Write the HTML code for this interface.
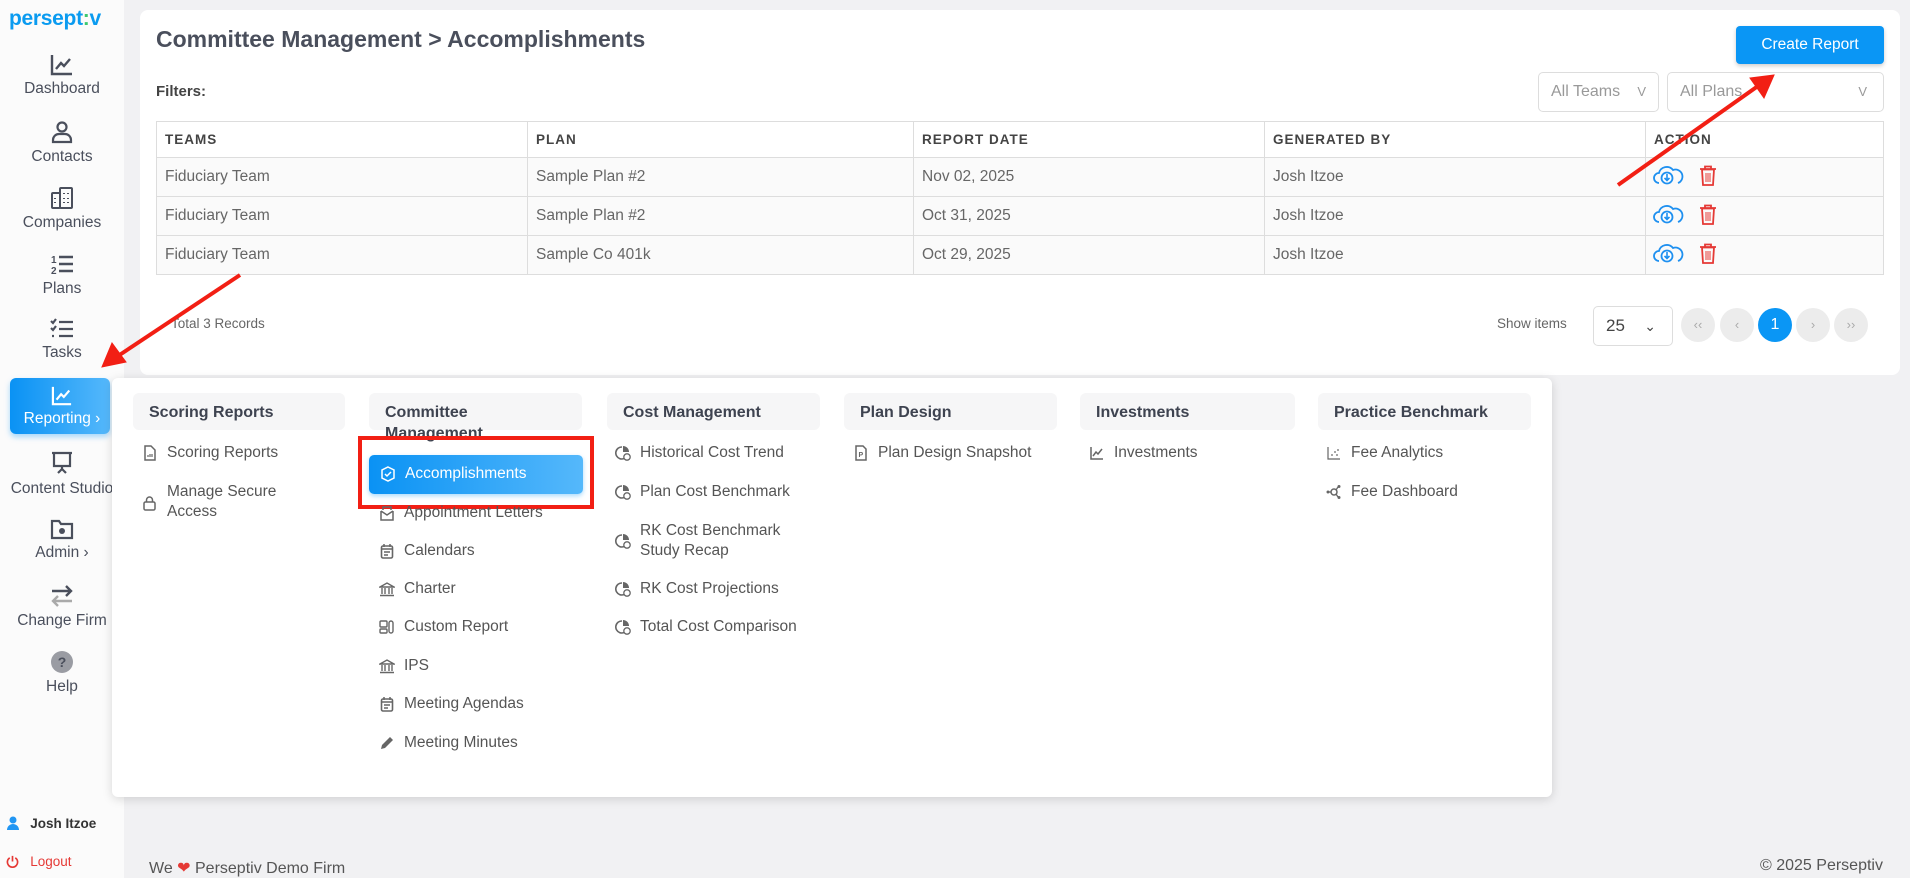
<!DOCTYPE html>
<html><head><meta charset="utf-8"><style>
*{box-sizing:border-box;margin:0;padding:0}
body{width:1910px;height:878px;background:#f1f1f3;font-family:"Liberation Sans",sans-serif;color:#555;position:relative;overflow:hidden}
.a{position:absolute}
.side{left:0;top:0;width:124px;height:878px;background:#fbfbfb}
.logo{left:9px;top:7px;font-size:21px;font-weight:bold;color:#0a9bf0;letter-spacing:-0.3px}
.nav{position:absolute;left:0;width:124px;text-align:center;font-size:15.5px;color:#4a4f5c}
.nav svg{display:block;margin:0 auto 4px}
.card{left:140px;top:10px;width:1760px;height:365px;background:#fff;border-radius:8px}
.title{left:156px;top:26px;font-size:23px;font-weight:bold;color:#4a4f5c}
.btn{left:1736px;top:26px;width:148px;height:38px;background:#0a96f5;border-radius:4px;color:#fff;font-size:15.5px;text-align:center;line-height:38px;box-shadow:0 2px 4px rgba(0,0,0,.2)}
.sel{height:40px;border:1px solid #ddd;border-radius:5px;color:#999;font-size:16px;line-height:38px;padding-left:12px;background:#fff}
table{position:absolute;left:156px;top:121px;width:1728px;border-collapse:collapse;font-size:15.5px}
td,th{border:1px solid #ddd;text-align:left;padding-left:8px;color:#666;font-weight:normal}
th{height:36px;font-size:13.5px;font-weight:bold;letter-spacing:1px;color:#444}
td{height:39px;background:#fafafa}
.pg{width:34px;height:34px;border-radius:50%;background:#ececec;color:#aaa;text-align:center;line-height:34px;font-size:13px;top:308px}
.menu{left:112px;top:378px;width:1440px;height:419px;background:#fff;border-radius:6px;box-shadow:0 2px 10px rgba(0,0,0,.15)}
.hd{top:393px;height:37px;background:#f6f6f7;border-radius:6px;font-size:16px;font-weight:bold;color:#3e4350;padding:9px 0 0 16px;line-height:21px}
.it{font-size:15.5px;color:#555;line-height:20px;padding-left:25px}
.it svg{position:absolute;left:0;top:2px}
</style></head><body>
<svg width="0" height="0" style="position:absolute">
<defs>
<g id="doc"><path d="M3 1h6l4 4v10H3z" fill="none" stroke="#666" stroke-width="1.5"/><path d="M6 12v-2M8 12V9M10 12v-3" stroke="#666" stroke-width="1.2"/></g>
<g id="lock"><rect x="2" y="7" width="11" height="8" rx="1.5" fill="none" stroke="#666" stroke-width="1.5"/><path d="M4.5 7V5a3 3 0 0 1 6 0v2" fill="none" stroke="#666" stroke-width="1.5"/></g>
<g id="pie"><path d="M7 2a6 6 0 1 0 5 9" fill="none" stroke="#666" stroke-width="1.6"/><path d="M8 1v6h6a6 6 0 0 0-6-6z" fill="#666"/><circle cx="12" cy="12" r="3.2" fill="#fff" stroke="#666" stroke-width="1.3"/></g>
<g id="mail"><path d="M2 6v9h12V6M2 6l6 4 6-4M4 5V2h8v3" fill="none" stroke="#666" stroke-width="1.5"/></g>
<g id="cal"><rect x="2.5" y="3" width="11" height="12" rx="1.5" fill="none" stroke="#666" stroke-width="1.6"/><path d="M5 1v3M11 1v3M2.5 6h11M5 9h6M5 12h4" stroke="#666" stroke-width="1.5"/></g>
<g id="bank"><path d="M1 6l7-4 7 4zM3 7v6M6 7v6M10 7v6M13 7v6M1 14.5h14" fill="none" stroke="#666" stroke-width="1.4"/></g>
<g id="cust"><rect x="1" y="2" width="7" height="6" rx="1" fill="none" stroke="#666" stroke-width="1.4"/><rect x="1" y="10" width="7" height="4" rx="1" fill="none" stroke="#666" stroke-width="1.4"/><rect x="10" y="2" width="4" height="12" rx="2" fill="none" stroke="#666" stroke-width="1.4"/></g>
<g id="pen"><path d="M2 14l1-4 8-8 3 3-8 8z" fill="#666"/></g>
<g id="chart"><path d="M2 2v12h12M4 11l3-4 2 2 4-5" fill="none" stroke="#666" stroke-width="1.5"/></g>
<g id="dots"><path d="M2 2v12h12" fill="none" stroke="#666" stroke-width="1.2"/><circle cx="6" cy="10" r=".9" fill="#666"/><circle cx="9" cy="7" r=".9" fill="#666"/><circle cx="11" cy="10" r=".9" fill="#666"/><circle cx="12" cy="5" r=".9" fill="#666"/></g>
<g id="net"><circle cx="8" cy="8" r="3" fill="none" stroke="#666" stroke-width="1.5"/><circle cx="2" cy="8" r="1.5" fill="#666"/><circle cx="13" cy="2.5" r="1.5" fill="#666"/><circle cx="13" cy="13.5" r="1.5" fill="#666"/><path d="M3 8h2M10 6l2-3M10 10l2 3" stroke="#666" stroke-width="1.3"/></g>
<g id="pdoc"><path d="M3 1h7l3 3v11H3z" fill="none" stroke="#666" stroke-width="1.5"/><text x="5.5" y="12" font-size="7" font-weight="bold" fill="#666" font-family="Liberation Sans">P</text></g>
</defs></svg>
<div class="a side"></div>
<div class="a logo">persept<span style="color:#3cc86e">:</span>v</div>

<div class="nav" style="top:54px"><svg width="24" height="22" viewBox="0 0 24 22"><path d="M2 1v19h20M6 15l5-6 3 3 6-7" fill="none" stroke="#4a4f5c" stroke-width="2.4"/></svg>Dashboard</div>
<div class="nav" style="top:120px"><svg width="24" height="24" viewBox="0 0 24 24"><circle cx="12" cy="7" r="4.5" fill="none" stroke="#4a4f5c" stroke-width="2.2"/><path d="M3 22v-2a6 6 0 0 1 6-6h6a6 6 0 0 1 6 6v2z" fill="none" stroke="#4a4f5c" stroke-width="2.2"/></svg>Contacts</div>
<div class="nav" style="top:186px"><svg width="24" height="24" viewBox="0 0 24 24"><rect x="2" y="7" width="8" height="15" rx="1" fill="none" stroke="#4a4f5c" stroke-width="2"/><rect x="10" y="2" width="12" height="20" rx="1" fill="none" stroke="#4a4f5c" stroke-width="2"/><path d="M5 12v1M5 16v1M14 7v1M18 7v1M14 12v1M18 12v1M14 16v1M18 16v1" stroke="#4a4f5c" stroke-width="2"/></svg>Companies</div>
<div class="nav" style="top:252px"><svg width="24" height="24" viewBox="0 0 24 24"><text x="1" y="11" font-size="10" font-weight="bold" fill="#4a4f5c" font-family="Liberation Sans">1</text><text x="1" y="22" font-size="10" font-weight="bold" fill="#4a4f5c" font-family="Liberation Sans">2</text><path d="M9 5h14M9 12h14M9 19h14" stroke="#4a4f5c" stroke-width="2.4"/></svg>Plans</div>
<div class="nav" style="top:318px"><svg width="24" height="22" viewBox="0 0 24 22"><path d="M1 3l2 2 3-4M1 10l2 2 3-4M9 4h14M9 11h14M9 18h14M2 18h2" fill="none" stroke="#4a4f5c" stroke-width="2.2"/></svg>Tasks</div>
<div class="a" style="left:10px;top:378px;width:100px;height:56px;border-radius:6px;background:linear-gradient(90deg,#0a92f4,#55b8fb);box-shadow:0 3px 6px rgba(10,150,245,.35)"></div>
<div class="nav" style="top:386px;color:#fff"><svg width="22" height="20" viewBox="0 0 24 22"><path d="M2 1v19h20M6 15l5-6 3 3 6-7" fill="none" stroke="#fff" stroke-width="2.4"/></svg>Reporting ›</div>
<div class="nav" style="top:450px"><svg width="24" height="26" viewBox="0 0 24 26"><path d="M2 3h20M4 3v13h16V3M12 16v3M8 23l4-4 4 4" fill="none" stroke="#4a4f5c" stroke-width="2.2"/></svg>Content Studio</div>
<div class="nav" style="top:518px"><svg width="24" height="22" viewBox="0 0 24 22"><path d="M2 3h7l2 3h11v14H2z" fill="none" stroke="#4a4f5c" stroke-width="2.2"/><circle cx="12" cy="13" r="3" fill="#4a4f5c"/></svg>Admin ›</div>
<div class="nav" style="top:584px"><svg width="24" height="24" viewBox="0 0 24 24"><path d="M2 7h19M16 2l5 5-5 5" fill="none" stroke="#4a4f5c" stroke-width="2.4"/><path d="M22 17H3M8 12l-5 5 5 5" fill="none" stroke="#aaa" stroke-width="2.4"/></svg>Change Firm</div>
<div class="nav" style="top:650px"><svg width="24" height="24" viewBox="0 0 24 24"><circle cx="12" cy="12" r="11" fill="#9a9ca3"/><text x="12" y="17" text-anchor="middle" font-size="14" font-weight="bold" fill="#4a4f5c" font-family="Liberation Sans">?</text></svg>Help</div>
<div class="a" style="left:7px;top:816px;font-size:13.5px;font-weight:bold;color:#333"><svg width="12" height="14" viewBox="0 0 12 14" style="vertical-align:-2px"><circle cx="6" cy="4" r="3.5" fill="#2196f3"/><path d="M0 14a6 6 0 0 1 12 0z" fill="#2196f3"/></svg>&nbsp;&nbsp; Josh Itzoe</div>
<div class="a" style="left:6px;top:854px;font-size:13.5px;color:#e53935"><svg width="13" height="13" viewBox="0 0 14 14" style="vertical-align:-2px"><path d="M4 3a5.5 5.5 0 1 0 6 0M7 1v6" fill="none" stroke="#e53935" stroke-width="1.8"/></svg>&nbsp;&nbsp; Logout</div>

<div class="a card"></div>
<div class="a title">Committee Management &gt; Accomplishments</div>
<div class="a btn">Create Report</div>
<div class="a" style="left:156px;top:83px;font-size:15px;font-weight:bold;color:#444">Filters:</div>
<div class="a sel" style="left:1538px;top:72px;width:121px">All Teams <span style="position:absolute;right:12px;font-size:13px">V</span></div>
<div class="a sel" style="left:1667px;top:72px;width:217px">All Plans <span style="position:absolute;right:16px;font-size:13px">V</span></div>
<table>
<tr><th style="width:371px">TEAMS</th><th style="width:386px">PLAN</th><th style="width:351px">REPORT DATE</th><th style="width:381px">GENERATED BY</th><th>ACTION</th></tr>
<tr><td>Fiduciary Team</td><td>Sample Plan #2</td><td>Nov 02, 2025</td><td>Josh Itzoe</td><td></td></tr>
<tr><td>Fiduciary Team</td><td>Sample Plan #2</td><td>Oct 31, 2025</td><td>Josh Itzoe</td><td></td></tr>
<tr><td>Fiduciary Team</td><td>Sample Co 401k</td><td>Oct 29, 2025</td><td>Josh Itzoe</td><td></td></tr>
</table>
<svg class="a" style="left:1653px;top:163px" width="80" height="110" viewBox="0 0 80 110">
<g id="r"><path d="M6 20a5 5 0 0 1 0-10 8 8 0 0 1 14-3 6 6 0 0 1 5 13" fill="none" stroke="#1e90f0" stroke-width="1.8"/><circle cx="14" cy="15" r="5.5" fill="#fff" stroke="#1e90f0" stroke-width="1.8"/><path d="M14 11v6.5M11.5 15l2.5 2.5 2.5-2.5" fill="none" stroke="#1e90f0" stroke-width="1.6"/>
<path d="M47 6h16M52 6V3.5h6V6M49 6.5l1 15.5h10l1-15.5z" fill="none" stroke="#e53935" stroke-width="1.8"/><path d="M53 10v9M55 10v9M57 10v9" stroke="#e53935" stroke-width="1"/></g>
<use href="#r" y="39"/><use href="#r" y="78"/></svg>

<div class="a" style="left:171px;top:316px;font-size:13.5px;color:#666">Total 3 Records</div>
<div class="a" style="left:1497px;top:316px;font-size:13.5px;color:#666">Show items</div>
<div class="a sel" style="left:1593px;top:306px;width:80px;color:#444;font-size:17px">25 <span style="position:absolute;right:16px;font-size:14px">⌄</span></div>
<div class="a pg" style="left:1681px">‹‹</div><div class="a pg" style="left:1720px">‹</div>
<div class="a pg" style="left:1758px;background:#0a96f5;color:#fff;font-size:16px">1</div>
<div class="a pg" style="left:1796px">›</div><div class="a pg" style="left:1834px">››</div>

<div class="a" style="left:149px;top:858px;font-size:16px;color:#555">We <span style="color:#e53935">❤</span> Perseptiv Demo Firm</div>
<div class="a" style="left:1760px;top:857px;font-size:16px;color:#555">© 2025 Perseptiv</div>

<div class="a menu"></div>
<div class="a hd" style="left:133px;width:212px">Scoring Reports</div>
<div class="a hd" style="left:369px;width:213px">Committee<br>Management</div>
<div class="a hd" style="left:607px;width:213px">Cost Management</div>
<div class="a hd" style="left:844px;width:213px">Plan Design</div>
<div class="a hd" style="left:1080px;width:215px">Investments</div>
<div class="a hd" style="left:1318px;width:213px">Practice Benchmark</div>

<div class="a it" style="left:142px;top:443px"><svg width="16" height="16"><use href="#doc"/></svg>Scoring Reports</div>
<div class="a it" style="left:142px;top:482px;width:190px"><svg width="16" height="16" style="top:13px"><use href="#lock"/></svg>Manage Secure<br>Access</div>

<div class="a" style="left:369px;top:455px;width:214px;height:39px;border-radius:5px;background:linear-gradient(90deg,#0a92f4,#55b8fb);box-shadow:0 2px 5px rgba(10,150,245,.35)"></div>
<div class="a it" style="left:380px;top:464px;color:#fff"><svg width="16" height="16"><path d="M8 1l6 3v8l-6 3-6-3V4z" fill="none" stroke="#fff" stroke-width="1.5"/><path d="M5 8l2 2 4-4" fill="none" stroke="#fff" stroke-width="1.5"/></svg>Accomplishments</div>
<div class="a" style="left:358px;top:436px;width:236px;height:73px;border:4px solid #f21f14"></div>
<div class="a it" style="left:379px;top:503px"><svg width="16" height="16"><use href="#mail"/></svg>Appointment Letters</div>
<div class="a it" style="left:379px;top:541px"><svg width="16" height="16"><use href="#cal"/></svg>Calendars</div>
<div class="a it" style="left:379px;top:579px"><svg width="16" height="16"><use href="#bank"/></svg>Charter</div>
<div class="a it" style="left:379px;top:617px"><svg width="16" height="16"><use href="#cust"/></svg>Custom Report</div>
<div class="a it" style="left:379px;top:656px"><svg width="16" height="16"><use href="#bank"/></svg>IPS</div>
<div class="a it" style="left:379px;top:694px"><svg width="16" height="16"><use href="#cal"/></svg>Meeting Agendas</div>
<div class="a it" style="left:379px;top:733px"><svg width="16" height="16"><use href="#pen"/></svg>Meeting Minutes</div>

<div class="a it" style="left:615px;top:443px"><svg width="16" height="16"><use href="#pie"/></svg>Historical Cost Trend</div>
<div class="a it" style="left:615px;top:482px"><svg width="16" height="16"><use href="#pie"/></svg>Plan Cost Benchmark</div>
<div class="a it" style="left:615px;top:521px;width:200px"><svg width="16" height="16" style="top:12px"><use href="#pie"/></svg>RK Cost Benchmark<br>Study Recap</div>
<div class="a it" style="left:615px;top:579px"><svg width="16" height="16"><use href="#pie"/></svg>RK Cost Projections</div>
<div class="a it" style="left:615px;top:617px"><svg width="16" height="16"><use href="#pie"/></svg>Total Cost Comparison</div>

<div class="a it" style="left:853px;top:443px"><svg width="16" height="16"><use href="#pdoc"/></svg>Plan Design Snapshot</div>
<div class="a it" style="left:1089px;top:443px"><svg width="16" height="16"><use href="#chart"/></svg>Investments</div>
<div class="a it" style="left:1326px;top:443px"><svg width="16" height="16"><use href="#dots"/></svg>Fee Analytics</div>
<div class="a it" style="left:1326px;top:482px"><svg width="16" height="16"><use href="#net"/></svg>Fee Dashboard</div>

<svg class="a" style="left:0;top:0" width="1910" height="878">
<g stroke="#f21f14" stroke-width="4" fill="#f21f14">
<line x1="240" y1="275" x2="118" y2="356"/><polygon points="102,367 112,343 126,362" stroke-width="1"/>
<line x1="1618" y1="185" x2="1758" y2="86"/><polygon points="1774,75 1764,98 1750,78" stroke-width="1"/>
</g></svg>
</body></html>
